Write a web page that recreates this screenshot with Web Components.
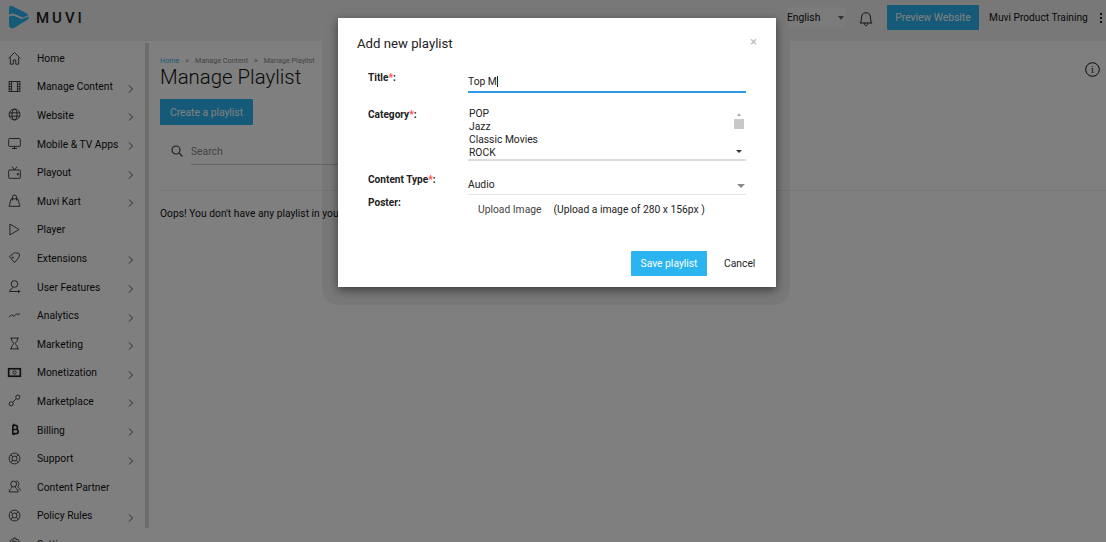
<!DOCTYPE html>
<html>
<head>
<meta charset="utf-8">
<title>Manage Playlist</title>
<style>
html, body { margin: 0; height: 100%; overflow: hidden; }
body { font-family: Roboto, "Liberation Sans", sans-serif; background: #fff; }
</style>
</head>
<body>
<muvi-app></muvi-app>
<script>
const ICONS = {
  home: '<path d="M2 10 9 3l7 7M4 9v8h3.500v-5h3v5H14V9"/>',
  content: '<rect x="2.500" y="3" width="13" height="12"/><path d="M5.500 3v12M12.500 3v12M2.500 6h3M2.500 9h3M2.500 12h3M12.500 6h3M12.500 9h3M12.500 12h3"/>',
  web: '<circle cx="9" cy="9" r="6.500"/><ellipse cx="9" cy="9" rx="3" ry="6.500"/><path d="M2.500 7h13M2.500 11h13"/>',
  tv: '<rect x="2" y="3" width="14" height="9.500" rx="1"/><path d="M6 15h6M9 12.500V15"/>',
  playout: '<rect x="2" y="6" width="14" height="10" rx="1"/><path d="m6 2 3 4 3-4"/><circle cx="13" cy="11" r="1"/>',
  kart: '<path d="M2.500 16 5 7h8l2.500 9zM6.500 9V5a2.500 2.500 0 0 1 5 0v4"/>',
  player: '<path d="M3.500 2.500v13l11-6.500z"/>',
  ext: '<path d="m3 8 5-4c1-1 2.500-1 3 0 1-1 4-1 4 2 0 2-1.500 3-1.500 4L9 15z"/><circle cx="7" cy="9" r=".7"/>',
  user: '<circle cx="9" cy="6" r="4"/><path d="M7 10c0 2-4 2-4 5h9M14 13v4M12 15h4"/>',
  chart: '<path d="m2.500 11 3-3 3 2 3-3 2 1 2-1.500"/>',
  hour: '<path d="M4 2.500h10M4 15.500h10M5 2.500c0 4 3 5 3 6.500s-3 2.500-3 6.500M13 2.500c0 4-3 5-3 6.500s3 2.500 3 6.500"/>',
  money: '<rect x="2" y="4.500" width="14" height="9" stroke-width="2"/><circle cx="9" cy="9" r="2"/>',
  market: '<circle cx="5" cy="13" r="2.500"/><circle cx="13" cy="5" r="2.500"/><path d="m7 11 4-4"/>',
  billing: '<path stroke-width="2" d="M7 4v10M7 4h3a2 2 0 0 1 0 5H7h4a2.500 2.500 0 0 1 0 5H6M8 2v2M8 14v2"/>',
  support: '<circle cx="9" cy="9" r="6.500"/><circle cx="9" cy="9" r="3"/><path d="m4.500 4.500 2.300 2.300M13.500 4.500l-2.300 2.300M4.500 13.500l2.300-2.300M13.500 13.500l-2.300-2.300"/>',
  partner: '<circle cx="8" cy="6" r="3.500"/><path d="M6 9.500c0 2-3.500 2.500-3.500 6h11c0-3.500-3.500-4-3.500-6M11 2.500c3-.5 4.500 4 2 6.500 0 2 3 2 3 5"/>',
  gear: '<circle cx="9" cy="9" r="3"/><path d="m7.500 2.500h3l.5 2 2-.5 1.500 2.500-1.500 1.500v2l1.500 1.500-1.500 2.500-2-.5-.5 2h-3l-.5-2-2 .5L3.500 12 5 10.500v-2L3.500 7 5 4.500l2 .5z"/>'
};

const MENU = [
  ['home', 'Home', false], ['content', 'Manage Content', true], ['web', 'Website', true],
  ['tv', 'Mobile &amp; TV Apps', true], ['playout', 'Playout', true], ['kart', 'Muvi Kart', true],
  ['player', 'Player', false], ['ext', 'Extensions', true], ['user', 'User Features', true],
  ['chart', 'Analytics', true], ['hour', 'Marketing', true], ['money', 'Monetization', true],
  ['market', 'Marketplace', true], ['billing', 'Billing', true], ['support', 'Support', true],
  ['partner', 'Content Partner', false], ['support', 'Policy Rules', true], ['gear', 'Settings', true]
];

class MuviNavItem extends HTMLElement {
  connectedCallback() {
    const hasArrow = this.hasAttribute('arrow');
    this.attachShadow({mode: 'open'}).innerHTML = `
      <style>
        :host { display: flex; align-items: center; height: 28.6px; color: #111; font-size: 10.3px; flex: none; }
        svg.ic { width: 15px; height: 15px; margin: -1px 15px 0 7px; fill: none; stroke: #222; stroke-width: 1; flex: none; }
        span { flex: 1; white-space: nowrap; }
        svg.arr { width: 6px; height: 8px; margin: 4px 11px 0 0; fill: none; stroke: #555; stroke-width: 1; flex: none; }
      </style>
      <svg class="ic" viewBox="0 0 18 18">${ICONS[this.getAttribute('icon')]}</svg>
      <span><slot></slot></span>
      ${hasArrow ? '<svg class="arr" viewBox="0 0 6 8"><path d="m1 .5 3.500 3.500L1 7.500"/></svg>' : ''}`;
  }
}
customElements.define('muvi-nav-item', MuviNavItem);

class MuviSidebar extends HTMLElement {
  connectedCallback() {
    this.attachShadow({mode: 'open'}).innerHTML = `
      <style>
        :host { display: flex; width: 149px; flex: none; height: 498px; }
        nav { display: flex; flex-direction: column; width: 145px; overflow: hidden; }
        .bar { width: 4px; height: 485px; margin-top: -1px; background: #d8d8d8; flex: none; }
      </style>
      <nav>${MENU.map(m => `<muvi-nav-item icon="${m[0]}" ${m[2] ? 'arrow' : ''}>${m[1]}</muvi-nav-item>`).join('')}</nav>
      <div class="bar"></div>`;
  }
}
customElements.define('muvi-sidebar', MuviSidebar);

class MuviHeader extends HTMLElement {
  constructor() {
    super();
    this.attachShadow({mode: 'open'}).innerHTML = `
      <style>
        :host { display: flex; align-items: center; height: 41px; box-sizing: border-box; padding-bottom: 6px; background: #f1f1f1; color: #111; flex: none; }
        .logo { display: flex; align-items: center; margin-left: 8px; width: 766px; }
        .logo svg { width: 21px; height: 24px; margin-top: -1px; }
        .logo b { font-weight: 500; font-size: 15px; letter-spacing: 3px; margin-left: 7px; color: #222; }
        .lang { width: 58px; height: 21px; margin: 0 0 0 13px; font-size: 10.3px; background: #f6f6f6; display: flex; align-items: center; justify-content: space-between; box-sizing: border-box; padding-right: 1px; }
        .lang i { border: 3.500px solid transparent; border-top: 4px solid #666; border-bottom: 0; }
        .bell { width: 16px; height: 18px; margin: 0 0 0 13px; fill: none; stroke: #222; }
        .btn { background: #2bb4f0; color: #fff; font-size: 10.3px; width: 92px; height: 25px; display: flex; align-items: center; justify-content: center; margin: 0 0 0 13px; border-radius: 1px; }
        .name { font-size: 10.2px; margin-left: 10px; white-space: nowrap; }
        .dots { width: 2px; height: 10px; margin-left: 12px; background: repeating-linear-gradient(#222 0 2px, transparent 2px 4px); }
      </style>
      <div class="logo">
        <svg viewBox="0 0 21 24">
          <path fill="#2bb4f0" d="M1 3Q1 0 4 1L19 8.500Q21 9.500 19 11L15 12.500 5 8.500 1 9.500z"/>
          <path fill="#2bb4f0" d="M1 11.500 5 10.500 13.500 14 21 11.500Q21 14 19 15L6 23Q2 24 1 21z"/>
        </svg>
        <b>MUVI</b>
      </div>
      <div class="lang">English<i></i></div>
      <svg class="bell" viewBox="0 0 16 18"><path d="M2 14c2-2 1-5 2-8 1-3 7-3 8 0 1 3 0 6 2 8zM6.500 14.500c0 3 3 3 3 0"/></svg>
      <div class="btn">Preview Website</div>
      <div class="name">Muvi Product Training</div>
      <div class="dots"></div>`;
  }
}
customElements.define('muvi-header', MuviHeader);

class MuviContent extends HTMLElement {
  constructor() {
    super();
    this.attachShadow({mode: 'open'}).innerHTML = `
      <style>
        :host { display: block; flex: 1; min-width: 0; box-sizing: border-box; padding: 11px 0 0 11px; color: #111; }
        .crumb { font-size: 7.2px; color: #888; display: flex; gap: 6px; height: 10px; align-items: center; }
        .crumb a { color: #2bb4f0; }
        h1 { font-weight: 300; font-size: 20.4px; line-height: 25px; margin: 0 0 9px; color: #111; white-space: nowrap; }
        .btn { background: #2bb4f0; color: #fff; font-size: 10.3px; width: 93px; height: 26px; display: flex; align-items: center; justify-content: center; border-radius: 1px; }
        .search { display: flex; align-items: center; height: 28px; margin: 12px 0 0 11px; color: #888; font-size: 10.3px; width: 190px; }
        .search svg { width: 12px; height: 12px; fill: none; stroke: #444; stroke-width: 1.200; margin-right: 8px; }
        .search span { flex: 1; align-self: stretch; display: flex; align-items: center; border-bottom: 1px solid #ccc; padding-top: 1px; }
        hr { border: 0; border-top: 1px solid #f0f0f0; margin: 25px 0 16px; }
        p { margin: 0; font-size: 10.3px; white-space: nowrap; }
        .info { position: absolute; top: 62px; left: 1085px; width: 15px; height: 15px; fill: none; stroke: #111; }
        .info text { font: 10px "Liberation Serif", serif; fill: #111; stroke: none; }
      </style>
      <div class="crumb"><a>Home</a><span>&gt;</span><span>Manage Content</span><span>&gt;</span><span>Manage Playlist</span></div>
      <h1>Manage Playlist</h1>
      <div class="btn">Create a playlist</div>
      <div class="search">
        <svg viewBox="0 0 12 12"><circle cx="5" cy="5" r="4"/><path d="m8 8 3.500 3.500"/></svg>
        <span>Search</span>
      </div>
      <hr>
      <p>Oops! You don't have any playlist in your store.</p>
      <svg class="info" viewBox="0 0 15 15"><circle cx="7.500" cy="7.500" r="6.800"/><text x="7.500" y="11" text-anchor="middle">i</text></svg>`;
  }
}
customElements.define('muvi-content', MuviContent);

class MuviField extends HTMLElement {
  constructor() {
    super();
    this.attachShadow({mode: 'open'}).innerHTML = `
      <style>
        :host { display: flex; }
        label { width: 111px; padding: 1px 0 0 11px; flex: none; box-sizing: border-box; font-weight: 700; font-size: 10.1px; color: #222; }
        .v { width: 278px; flex: none; }
      </style>
      <label><slot name="label"></slot></label>
      <div class="v"><slot></slot></div>`;
  }
}
customElements.define('muvi-field', MuviField);

class MuviListbox extends HTMLElement {
  constructor() {
    super();
    this.attachShadow({mode: 'open'}).innerHTML = `
      <style>
        :host { display: flex; justify-content: space-between; height: 55px; box-sizing: border-box; border-bottom: 2px solid #ddd; padding-left: 1px; font-size: 10.3px; line-height: 13px; color: #222; }
        .opts { padding-top: 1px; }
        .bar { width: 12px; display: flex; flex-direction: column; align-items: center; padding: 7px 1px 0 0; }
        .up { border: 2.500px solid transparent; border-bottom: 3px solid #aaa; border-top: 0; }
        .thumb { width: 10px; height: 10px; background: #c8c8c8; margin-top: 3px; }
        .down { border: 3px solid transparent; border-top: 3px solid #333; border-bottom: 0; margin-top: auto; margin-bottom: 6px; }
      </style>
      <div class="opts"><slot></slot></div>
      <div class="bar"><i class="up"></i><i class="thumb"></i><i class="down"></i></div>`;
  }
}
customElements.define('muvi-listbox', MuviListbox);

class MuviModal extends HTMLElement {
  constructor() {
    super();
    this.attachShadow({mode: 'open'}).innerHTML = `
      <style>
        :host { position: absolute; left: 338px; top: 18px; width: 438px; height: 269px; box-sizing: border-box; background: #fff; display: block; padding: 18px 20px 0 19px; box-shadow: 0 3px 9px rgba(0,0,0,.5); color: #222; }
        .x { position: absolute; right: 19px; top: 17px; color: #bbb; font-size: 13px; line-height: 13px; }
        h4 { margin: 0 0 20px; font-weight: 400; font-size: 13.200px; line-height: 15px; color: #222; }
        .req { color: #f44; }
        .title { height: 24px; margin-top: -2px; padding-top: 2px; border-bottom: 2px solid #2f9be8; box-sizing: border-box; font-size: 10.3px; display: flex; align-items: center; }
        .caret { width: 1px; height: 11px; background: #222; }
        .sel { height: 19px; padding: 0 1px 2px 0; display: flex; justify-content: space-between; align-items: center; border-bottom: 1px solid #e4e4e4; box-sizing: border-box; font-size: 10.3px; }
        .sel i { border: 4px solid transparent; border-top: 4px solid #888; border-bottom: 0; margin-top: 4px; }
        .up { display: flex; font-size: 10.3px; height: 22px; padding: 6px 0 0 10px; box-sizing: border-box; gap: 12px; align-items: center; }
        .up a { color: #444; }
        .foot { display: flex; justify-content: flex-end; align-items: center; margin-top: 34px; }
        .save { background: #2bb4f0; color: #fff; font-size: 10.3px; width: 76px; height: 25px; display: flex; align-items: center; justify-content: center; border-radius: 1px; }
        .cancel { font-size: 10.3px; margin: 0 0 0 17px; width: 32px; color: #222; }
      </style>
      <div class="x">×</div>
      <h4>Add new playlist</h4>
      <muvi-field style="margin-bottom:13px"><span slot="label">Title<span class="req">*</span>:</span>
        <div class="title">Top M<span class="caret"></span></div></muvi-field>
      <muvi-field style="margin-bottom:15px"><span slot="label" style="position:relative;top:2px">Category<span class="req">*</span>:</span>
        <muvi-listbox><div>POP</div><div>Jazz</div><div>Classic Movies</div><div>ROCK</div></muvi-listbox></muvi-field>
      <muvi-field><span slot="label" style="position:relative;top:-3px">Content Type<span class="req">*</span>:</span>
        <div class="sel">Audio<i></i></div></muvi-field>
      <muvi-field><span slot="label" style="position:relative;top:1px">Poster:</span>
        <div class="up"><a>Upload Image</a><span>(Upload a image of 280 x 156px )</span></div></muvi-field>
      <div class="foot"><div class="save">Save playlist</div><div class="cancel">Cancel</div></div>`;
  }
}
customElements.define('muvi-modal', MuviModal);

class MuviApp extends HTMLElement {
  constructor() {
    super();
    this.attachShadow({mode: 'open'}).innerHTML = `
      <style>
        :host { display: flex; flex-direction: column; width: 1106px; height: 542px; overflow: hidden; position: relative; background: #fff; }
        .body { display: flex; flex: 1; min-height: 0; padding-top: 3px; }
        .shade { position: absolute; inset: 0; background: rgba(0,0,0,.5); }
        .halo { position: absolute; left: 322px; top: 41px; width: 468px; height: 264px; border-radius: 0 0 16px 16px; background: rgba(0,0,0,.05); }
      </style>
      <muvi-header></muvi-header>
      <div class="body"><muvi-sidebar></muvi-sidebar><muvi-content></muvi-content></div>
      <div class="shade"></div>
      <div class="halo"></div>
      <muvi-modal></muvi-modal>`;
  }
}
customElements.define('muvi-app', MuviApp);
</script>
</body>
</html>
